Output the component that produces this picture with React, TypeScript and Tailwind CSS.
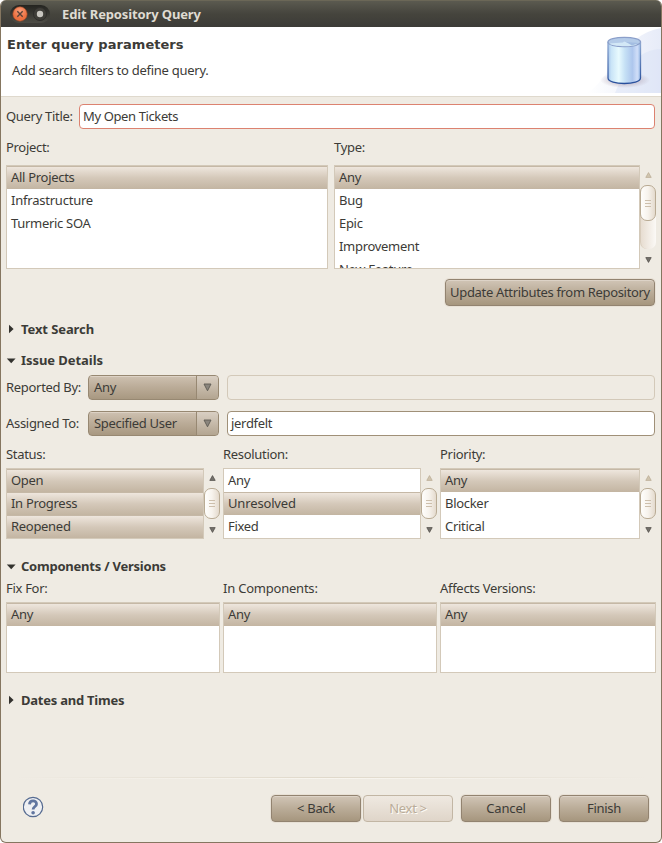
import React from "react";

type Item = { text: string; selected?: boolean; track?: string };

function Row({ text, selected, track = "" }: Item) {
  return (
    <div
      className={
        "flex h-[23px] shrink-0 items-center whitespace-nowrap pl-[4px] text-[#3c3b37] " +
        (selected
          ? "border-t border-[#c5b8a6] bg-linear-to-b from-[#eee6dd] via-[#d4c8b9] to-[#c3b5a2] pb-[2px]"
          : "pb-px")
      }
    >
      <span className={track}>{text}</span>
    </div>
  );
}

function List({ items, className }: { items: Item[]; className: string }) {
  return (
    <div className={"flex shrink-0 flex-col overflow-hidden border border-[#d3c9b9] bg-white " + className}>
      {items.map((item) => (
        <Row key={item.text} {...item} />
      ))}
    </div>
  );
}

function Arrow({ up, faded }: { up?: boolean; faded?: boolean }) {
  return (
    <svg width="7" height="6" viewBox="0 0 7 6" className="shrink-0">
      <path
        d={up ? "M3.5 0.6 6.2 5.4H0.8Z" : "M3.5 5.4 6.2 0.6H0.8Z"}
        fill={faded ? "#d0c4ae" : "#74716c"}
        stroke={faded ? "#bcae98" : "#55524d"}
        strokeWidth="0.8"
      />
    </svg>
  );
}

function Scroll({ tall, faded }: { tall?: boolean; faded?: boolean }) {
  return (
    <div className={"flex w-4 shrink-0 flex-col items-center justify-between pt-[7px] pb-[6px] " + (tall ? "h-[104px]" : "h-[71px]")}>
      <Arrow up faded={faded} />
      <div
        className={
          "w-4 " +
          (tall
            ? "mb-px h-[64px] rounded-[7px] border-l border-[#d8ccbc] bg-linear-to-r from-[#e7ddd1] to-[#fbf9f6]"
            : "-mt-px mb-px h-[31px]")
        }
      >
        <div
          className={
            "flex w-4 flex-col items-center justify-center gap-[2px] rounded-[7px] border border-[#b9ab94] bg-linear-to-r from-[#fffefc] via-[#f7f3ed] to-[#e4dacd] " +
            (tall ? "-ml-px h-[36px]" : "h-[31px]")
          }
        >
          <i className="h-px w-[6px] bg-[#cdbfac]" />
          <i className="h-px w-[6px] bg-[#cdbfac]" />
          <i className="h-px w-[6px] bg-[#cdbfac]" />
        </div>
      </div>
      <Arrow />
    </div>
  );
}

function Section({ title, open, track }: { title: string; open?: boolean; track: string }) {
  return (
    <div className="flex h-5 items-center text-[13px] font-bold">
      <svg width="15" height="10" viewBox="0 0 15 10" className="shrink-0">
        <path d={open ? "M0.8 3.6H9.6L5.2 8.2Z" : "M3 0.7V9.3L7.6 5Z"} fill="#33322e" />
      </svg>
      <span className={"whitespace-nowrap " + track}>{title}</span>
    </div>
  );
}

function Combo({ text }: { text: string }) {
  return (
    <div className="flex h-[25px] w-[131px] shrink-0 overflow-hidden rounded-[4px] border border-[#978872] bg-linear-to-b from-[#cec1b1] via-[#baab97] to-[#a89881]">
      <div className="flex w-[107px] items-center border-t border-[#ddd2c5] pb-[2px] pl-[5px]">
        <span className="whitespace-nowrap">{text}</span>
      </div>
      <div className="flex flex-1 items-center justify-center border-l border-[#978872] bg-linear-to-b from-[#d9cfc3] to-[#b3a591] pr-px">
        <svg width="9" height="9" viewBox="0 0 9 9">
          <path d="M1 1H8L4.5 7.8Z" fill="#8a857d" stroke="#5e5a52" strokeWidth="0.9" />
        </svg>
      </div>
    </div>
  );
}

function Button({ text, className = "w-[90px]", disabled, track = "" }: { text: string; className?: string; disabled?: boolean; track?: string }) {
  return (
    <button
      className={
        "flex h-[27px] shrink-0 items-center justify-center whitespace-nowrap rounded-[4px] border bg-linear-to-b pb-[2px] " +
        (disabled
          ? "border-[#c2b6a4] from-[#efe9e1] to-[#dfd5c9] text-[#b9ac99] [text-shadow:1px_1px_0_#fffdf8] "
          : "border-[#928370] from-[#d1c5b6] via-[#baac98] to-[#a6967e] text-[#3c3b37] shadow-[inset_0_1px_0_#ddd3c7,0_0_0_1px_#e8e1d6] ") +
        className
      }
    >
      <span className={track}>{text}</span>
    </button>
  );
}

function Database() {
  return (
    <svg width="74" height="66" viewBox="0 0 74 66" className="shrink-0">
      <defs>
        <linearGradient id="sky" x1="0" y1="0" x2="1" y2="0">
          <stop offset="0" stopColor="#fff" />
          <stop offset="1" stopColor="#dfe5f6" />
        </linearGradient>
        <linearGradient id="body" x1="0" y1="0" x2="1" y2="0">
          <stop offset="0" stopColor="#a6c4ea" />
          <stop offset="0.1" stopColor="#c9e4f7" />
          <stop offset="0.33" stopColor="#e8fafe" />
          <stop offset="0.52" stopColor="#c6e1f5" />
          <stop offset="0.75" stopColor="#adc6ed" />
          <stop offset="0.9" stopColor="#d0def8" />
          <stop offset="1" stopColor="#9dbde8" />
        </linearGradient>
        <linearGradient id="rim" x1="0" y1="0" x2="0" y2="1">
          <stop offset="0" stopColor="#8fa9d2" />
          <stop offset="1" stopColor="#274f9c" />
        </linearGradient>
        <radialGradient id="shade">
          <stop offset="0" stopColor="#a08e9e" stopOpacity="0.8" />
          <stop offset="1" stopColor="#a08e9e" stopOpacity="0" />
        </radialGradient>
      </defs>
      <path d="M0 66C22 54 34 8 74 1V66Z" fill="url(#sky)" opacity="0.75" />
      <path d="M28 66C38 42 52 22 74 22V66Z" fill="#d5def5" opacity="0.4" />
      <ellipse cx="38" cy="53" rx="25" ry="8" fill="url(#shade)" />
      <path d="M21 15.500V51C21 58.300 53.500 58.300 53.500 51V15.500Z" fill="url(#body)" stroke="url(#rim)" strokeWidth="1.300" />
      <ellipse cx="37.250" cy="15" rx="16.250" ry="4.600" fill="#b4cbe8" stroke="#8b9fca" strokeWidth="1.300" />
      <path d="M22 16.500 36 15.500 37 14.500 40 15.500 50 17.500C46 20 27 20 22 16.500Z" fill="#d3e8f6" />
      <path d="M39 15 45 18.500 52 16Z" fill="#a3bde2" />
    </svg>
  );
}

export default function App() {
  return (
    <div className="h-[843px] w-[662px] bg-white font-['Noto_Sans','Open_Sans',sans-serif] text-[13px] leading-[18px] tracking-[-0.3px] text-[#3c3b37]">
      <div className="flex h-[843px] w-[662px] flex-col overflow-hidden rounded-[6px] border-x border-b border-[#857660] bg-[#efebe3]">
        <header className="flex h-[27px] shrink-0 items-center border-t border-[#6b6757] bg-linear-to-b from-[#5b5a50] via-[#45443d] to-[#3c3b37] pl-[9px]">
          <div className="flex h-[18px] w-[40px] items-center gap-[4px] rounded-full bg-linear-to-b from-[#242420] to-[#4e4d46] pl-[2px]">
            <svg width="16" height="16" viewBox="0 0 16 16">
              <defs>
                <radialGradient id="close" cx="0.5" cy="0.3">
                  <stop offset="0" stopColor="#fa9f7c" />
                  <stop offset="1" stopColor="#ec7040" />
                </radialGradient>
              </defs>
              <circle cx="8" cy="8" r="7.200" fill="url(#close)" stroke="#a34a26" strokeWidth="0.600" />
              <path d="M5.300 5.300 10.700 10.700M10.700 5.300 5.300 10.700" stroke="#5a4238" strokeWidth="1.400" />
            </svg>
            <svg width="16" height="16" viewBox="0 0 16 16">
              <circle cx="8" cy="8" r="6.500" fill="#3f3e39" stroke="#2e2d2a" />
              <circle cx="8" cy="8" r="3.200" fill="#c8c6c0" />
            </svg>
          </div>
          <h1 className="ml-[12px] whitespace-nowrap text-[13px] font-bold tracking-[-0.13px] text-[#dfdbd2]">Edit Repository Query</h1>
        </header>

        <div className="flex h-[69px] shrink-0 justify-between bg-white">
          <div className="pl-[6px] pt-[9px]">
            <h2 className="whitespace-nowrap font-['DejaVu_Sans'] text-[13px] font-bold tracking-[0.04px]">Enter query parameters</h2>
            <p className="mt-[7px] whitespace-nowrap pl-[5px] tracking-[-0.26px]">Add search filters to define query.</p>
          </div>
          <Database />
        </div>

        <main className="flex flex-1 flex-col border-t border-[#dfd9cd] pl-[5px]">
          <div className="mt-[7px] flex h-[25px] items-center">
            <label className="w-[73px] whitespace-nowrap pb-px">Query Title:</label>
            <div className="flex h-[25px] w-[576px] items-center rounded-[4px] border border-[#dc8270] bg-white pb-[2px] pl-[3px] tracking-[-0.38px]">My Open Tickets</div>
          </div>

          <div className="mt-[9px] flex h-[18px]">
            <div className="w-[328px]">Project:</div>
            <div>Type:</div>
          </div>
          <div className="mt-[9px] flex h-[104px]">
            <List
              className="mr-[6px] h-[104px] w-[322px]"
              items={[
                { text: "All Projects", selected: true },
                { text: "Infrastructure", track: "tracking-[-0.22px]" },
                { text: "Turmeric SOA" },
              ]}
            />
            <List
              className="h-[104px] w-[306px]"
              items={[{ text: "Any", selected: true }, { text: "Bug" }, { text: "Epic" }, { text: "Improvement" }, { text: "New Feature" }]}
            />
            <Scroll tall faded />
          </div>
          <div className="mt-[10px] flex justify-end pr-[6px]">
            <Button text="Update Attributes from Repository" className="w-[210px]" track="tracking-[-0.33px]" />
          </div>

          <div className="mt-[13px]">
            <Section title="Text Search" track="tracking-[-0.09px]" />
          </div>
          <div className="mt-[11px]">
            <Section title="Issue Details" open track="tracking-[-0.06px]" />
          </div>
          <div className="mt-[5px] flex h-[25px] items-center">
            <label className="w-[82px] whitespace-nowrap pb-px">Reported By:</label>
            <Combo text="Any" />
            <div className="ml-[8px] h-[25px] w-[428px] rounded-[4px] border border-[#d3c9b9]" />
          </div>
          <div className="mt-[11px] flex h-[25px] items-center">
            <label className="w-[82px] whitespace-nowrap pb-px">Assigned To:</label>
            <Combo text="Specified User" />
            <div className="ml-[8px] flex h-[25px] w-[428px] items-center rounded-[4px] border border-[#a09078] bg-white pb-[2px] pl-[3px]">jerdfelt</div>
          </div>

          <div className="mt-[9px] flex h-[18px]">
            <div className="w-[217px]">Status:</div>
            <div className="w-[217px]">Resolution:</div>
            <div>Priority:</div>
          </div>
          <div className="mt-[5px] flex h-[71px]">
            <List
              className="h-[71px] w-[198px]"
              items={[{ text: "Open", selected: true }, { text: "In Progress", selected: true }, { text: "Reopened", selected: true }]}
            />
            <Scroll />
            <List
              className="ml-[3px] h-[71px] w-[198px]"
              items={[{ text: "Any" }, { text: "Unresolved", selected: true, track: "tracking-[-0.15px]" }, { text: "Fixed" }]}
            />
            <Scroll faded />
            <List
              className="ml-[3px] h-[71px] w-[200px]"
              items={[{ text: "Any", selected: true }, { text: "Blocker" }, { text: "Critical" }]}
            />
            <Scroll faded />
          </div>

          <div className="mt-[17px]">
            <Section title="Components / Versions" open track="tracking-[-0.23px]" />
          </div>
          <div className="mt-[3px] flex h-[18px]">
            <div className="w-[217px]">Fix For:</div>
            <div className="w-[217px] tracking-[-0.22px]">In Components:</div>
            <div>Affects Versions:</div>
          </div>
          <div className="mt-[5px] flex gap-[3px]">
            <List className="h-[71px] w-[214px]" items={[{ text: "Any", selected: true }]} />
            <List className="h-[71px] w-[214px]" items={[{ text: "Any", selected: true }]} />
            <List className="h-[71px] w-[216px]" items={[{ text: "Any", selected: true }]} />
          </div>
          <div className="mt-[17px]">
            <Section title="Dates and Times" track="tracking-[-0.24px]" />
          </div>

          <div className="mt-[67px] ml-[6px] h-px w-[638px] bg-linear-to-r from-transparent via-[#e0d9cb] to-transparent" />
          <div className="ml-[6px] h-px w-[638px] bg-linear-to-r from-transparent via-[#f8f5ef] to-transparent" />
          <div className="mt-[16px] flex h-[27px] items-center pl-[17px]">
            <svg width="22" height="22" viewBox="0 0 22 22" className="mr-[226px] -mt-[3px] shrink-0">
              <circle cx="10" cy="11" r="9.700" fill="#eff0f3" stroke="#566b91" strokeWidth="1.200" />
              <path d="M6.500 8.400C6.700 3.900 13.500 3.900 13.500 7.900C13.500 10.600 10.100 10.400 10.100 13.600" fill="none" stroke="#6176a0" strokeWidth="2.800" />
              <circle cx="10.100" cy="16.700" r="1.800" fill="#6176a0" />
            </svg>
            <Button text="< Back" />
            <Button text="Next >" disabled className="ml-[2px] w-[90px]" />
            <Button text="Cancel" className="ml-[8px] w-[90px]" track="tracking-[-0.15px]" />
            <Button text="Finish" className="ml-[8px] w-[90px]" />
          </div>
        </main>
      </div>
    </div>
  );
}
